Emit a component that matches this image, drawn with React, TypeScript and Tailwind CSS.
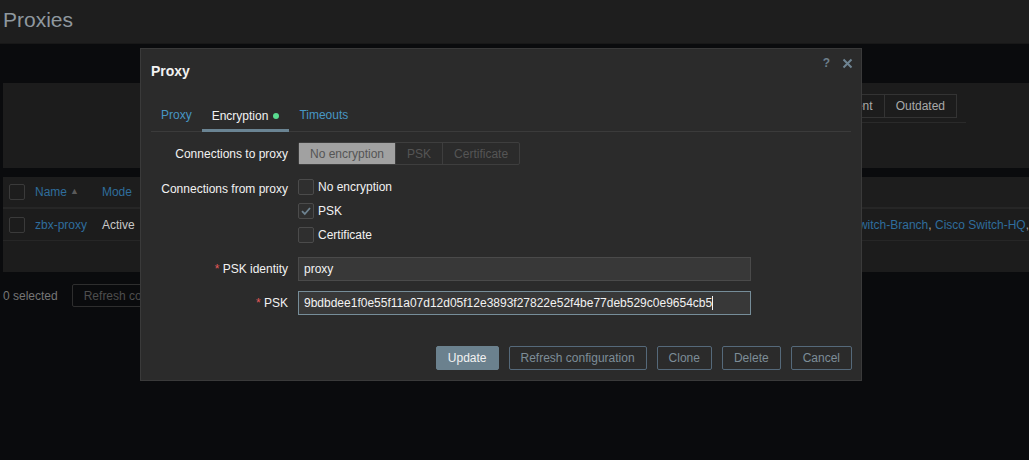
import React from "react";

const font = { fontFamily: '"Liberation Sans", Arial, sans-serif' };

function Checkbox({ checked }: { checked?: boolean }) {
  return (
    <span className="w-[16px] h-[16px] border border-[#4b4b4b] bg-[#2f2f2f] rounded-[2px] flex items-center justify-center shrink-0">
      {checked && (
        <svg width="12" height="12" viewBox="0 0 12 12">
          <path d="M2 6.2 L4.8 9 L10 3" stroke="#6e8391" strokeWidth="1.8" fill="none" />
        </svg>
      )}
    </span>
  );
}

export default function App() {
  return (
    <div className="relative w-[1029px] h-[460px] overflow-hidden bg-[#0a0b0d] text-[12px]" style={font}>
      {/* page underneath */}
      <div className="h-[44px] bg-[#1e1e1e] border-b border-[#181818] flex items-start pt-[4px] px-[3px]">
        <span className="text-[21px] text-[#8f989f]">Proxies</span>
      </div>
      <div className="pl-[3px] pt-[39px]">
        <div className="h-[85px] bg-[#1c1c1c] flex justify-end pr-[63px]">
          <div className="w-[340px] h-[40px] pt-[11px] pr-[9px] border-b border-[#2a2a2a] flex items-start justify-end">
            <div className="flex">
              <span className="h-[24px] px-[11px] flex items-center border border-[#333] text-[#a9a9a9]">Any</span>
              <span className="h-[24px] px-[11px] flex items-center border border-l-0 border-[#333] text-[#a9a9a9]">Current</span>
              <span className="h-[24px] px-[11px] flex items-center border border-l-0 border-[#333] text-[#a9a9a9]">Outdated</span>
            </div>
          </div>
        </div>
        <div className="mt-[9px] h-[95px] bg-[#1c1c1c]">
          <div className="h-[32px] flex items-center border-b-2 border-[#262626] bg-[#1d1d1d]">
            <span className="ml-[6px]"><span className="block w-[16px] h-[16px] border border-[#3a3a3a] rounded-[2px]" /></span>
            <span className="ml-[10px] text-[#2f6d9c]">Name</span>
            <span className="ml-[3px] text-[#5a5a5a] text-[9px]">▲</span>
            <span className="ml-[23px] text-[#2f6d9c]">Mode</span>
          </div>
          <div className="h-[32px] flex items-center border-b border-[#262626]">
            <span className="ml-[6px]"><span className="block w-[16px] h-[16px] border border-[#3a3a3a] rounded-[2px]" /></span>
            <span className="ml-[10px] text-[#2f6d9c]">zbx-proxy</span>
            <span className="ml-[15px] text-[#c8c8c8]">Active</span>
            <span className="ml-auto text-[#2f6d9c] whitespace-nowrap">
              Cisco Switch-Branch<span className="text-[#b0b0b0]">, </span>Cisco Switch-HQ<span className="text-[#b0b0b0]">,</span>
            </span>
          </div>
        </div>
        <div className="mt-[12px] flex items-center h-[23px]">
          <span className="text-[#767676]">0 selected</span>
          <span className="ml-[14px] h-[23px] px-[11px] flex items-center border border-[#2e2e2e] rounded-[2px] text-[#4e4e4e]">Refresh configuration</span>
        </div>
      </div>

      {/* modal */}
      <div className="absolute left-[140px] top-[48px] w-[722px] h-[333px] bg-[#2b2b2b] border border-[#3a3a3a] flex flex-col">
        <div className="h-[43px] shrink-0 flex items-start justify-between pl-[10px] pr-[8px] pt-[12px]">
          <span className="text-[14px] font-bold text-[#f2f2f2]">Proxy</span>
          <div className="flex items-center gap-[12px] -mt-[7px]">
            <span className="text-[#6d7f8b] text-[12px] font-bold">?</span>
            <svg width="11" height="11" viewBox="0 0 11 11">
              <path d="M1.5 1.5 L9.5 9.5 M9.5 1.5 L1.5 9.5" stroke="#6e8391" strokeWidth="2" />
            </svg>
          </div>
        </div>
        <div className="mx-[10px] border-b border-[#3b3b3b] flex h-[40px] shrink-0">
          <div className="px-[10px] flex items-end pb-[7px] text-[#4796c4]">Proxy</div>
          <div className="px-[10px] flex items-end pb-[4px] text-[#f2f2f2] border-b-[3px] border-[#6a8493] -mb-px">
            <span className="flex items-center">
              Encryption
              <span className="ml-[5px] w-[6px] h-[6px] rounded-full bg-[#59db8f]" />
            </span>
          </div>
          <div className="px-[10px] flex items-end pb-[7px] text-[#4796c4]">Timeouts</div>
        </div>

        <div className="mt-[10px] flex flex-col">
          <div className="flex items-center h-[23px]">
            <div className="w-[157px] text-right pr-[10px] text-[#f2f2f2]">Connections to proxy</div>
            <div className="flex border border-[#3e3e3e] rounded-[2px]">
              <span className="h-[21px] px-[11px] flex items-center bg-[#a1a1a1] text-[#555]">No encryption</span>
              <span className="h-[21px] px-[11px] flex items-center border-l border-[#3e3e3e] text-[#555]">PSK</span>
              <span className="h-[21px] px-[11px] flex items-center border-l border-[#3e3e3e] text-[#555]">Certificate</span>
            </div>
          </div>

          <div className="flex mt-[14px]">
            <div className="w-[157px] text-right pr-[10px] text-[#f2f2f2] pt-[1px]">Connections from proxy</div>
            <div className="flex flex-col gap-[8px]">
              <div className="flex items-center gap-[4px] h-[16px] text-[#f2f2f2]"><Checkbox />No encryption</div>
              <div className="flex items-center gap-[4px] h-[16px] text-[#f2f2f2]"><Checkbox checked />PSK</div>
              <div className="flex items-center gap-[4px] h-[16px] text-[#f2f2f2]"><Checkbox />Certificate</div>
            </div>
          </div>

          <div className="flex items-center h-[24px] mt-[14px]">
            <div className="w-[157px] text-right pr-[10px] text-[#f2f2f2]"><span className="text-[#e45959]">*</span> PSK identity</div>
            <div className="w-[453px] h-[24px] bg-[#383838] border border-[#4a4a4a] flex items-center px-[5px] text-[#f2f2f2]">proxy</div>
          </div>
          <div className="flex items-center h-[24px] mt-[10px]">
            <div className="w-[157px] text-right pr-[10px] text-[#f2f2f2]"><span className="text-[#e45959]">*</span> PSK</div>
            <div className="w-[453px] h-[24px] bg-[#383838] border border-[#768d99] flex items-center px-[5px] text-[#f2f2f2]">
              9bdbdee1f0e55f11a07d12d05f12e3893f27822e52f4be77deb529c0e9654cb5
              <span className="w-px h-[14px] bg-[#f2f2f2]" />
            </div>
          </div>
        </div>

        <div className="mt-auto mb-[10px] mr-[9px] flex justify-end gap-[10px]">
          <span className="h-[24px] px-[11px] flex items-center bg-[#6b818e] text-[#f2f2f2] rounded-[2px] border border-[#6b818e]">Update</span>
          <span className="h-[24px] px-[11px] flex items-center border border-[#55697a] text-[#7d8d98] rounded-[2px]">Refresh configuration</span>
          <span className="h-[24px] px-[11px] flex items-center border border-[#55697a] text-[#7d8d98] rounded-[2px]">Clone</span>
          <span className="h-[24px] px-[11px] flex items-center border border-[#55697a] text-[#7d8d98] rounded-[2px]">Delete</span>
          <span className="h-[24px] px-[11px] flex items-center border border-[#55697a] text-[#7d8d98] rounded-[2px]">Cancel</span>
        </div>
      </div>
    </div>
  );
}
